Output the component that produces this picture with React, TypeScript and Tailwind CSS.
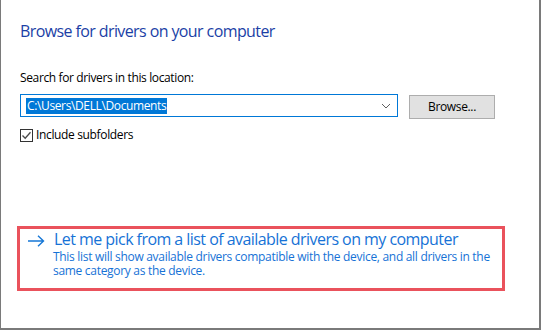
import React from "react";

const font = { fontFamily: '"Open Sans", "Noto Sans", sans-serif' };

export default function App() {
  return (
    <div
      className="w-[541px] h-[330px] bg-white border-l border-r-2 border-b-2 border-[#7a7a7a] flex flex-col"
      style={font}
    >
      <div className="pl-[19px] flex flex-col">
        <div className="mt-[21px] h-[20px] leading-[20px] text-[16px] text-[#1b3fa6] tracking-[-0.6px]">
          Browse for drivers on your computer
        </div>
        <div className="mt-[29px] h-[16px] leading-[16px] text-[12px] text-black tracking-[-0.37px]">
          Search for drivers in this location:
        </div>
        <div className="mt-[8px] flex items-start">
          <div className="w-[378px] h-[23px] border border-[#0078d7] flex items-center pl-[5px] pr-[6px]">
            <span className="h-[16px] leading-[16px] bg-[#0078d7] text-white text-[12px] px-[1px] tracking-[-0.37px]">
              C:\Users\DELL\Documents
            </span>
            <div className="flex-1" />
            <svg width="10" height="6" viewBox="0 0 10 6" className="mt-[1px]">
              <path d="M1 1 L5 5 L9 1" fill="none" stroke="#606060" strokeWidth="1" />
            </svg>
          </div>
          <button className="ml-[11px] mt-[1px] w-[86px] h-[24px] bg-[#e1e1e1] border border-[#adadad] text-[12px] leading-[20px] text-black tracking-[-0.35px]">
            Browse...
          </button>
        </div>
        <div className="mt-[9px] flex items-center h-[14px]">
          <div className="w-[13px] h-[13px] border border-[#333] flex items-center justify-center bg-white">
            <svg width="11" height="11" viewBox="0 0 11 11">
              <path d="M1.5 5.5 L4.2 8.3 L9.5 2.2" fill="none" stroke="#4a4a4a" strokeWidth="1.3" />
            </svg>
          </div>
          <span className="ml-[3px] text-[12px] leading-[14px] text-black tracking-[-0.35px]">
            Include subfolders
          </span>
        </div>
      </div>
      <div className="ml-[16px] mt-[84px] w-[488px] h-[65px] border-[3px] border-[#ea525c] flex flex-col">
        <div className="flex items-start mt-[1px] h-[18px]">
          <svg width="17" height="12" viewBox="0 0 17 12" className="ml-[8px] mt-[5px]">
            <path d="M0 6 H15.5 M10 0.8 L15.5 6 L10 11.2" fill="none" stroke="#1677d6" strokeWidth="1.4" />
          </svg>
          <span className="ml-[9px] text-[16px] leading-[18px] text-[#1672d6] tracking-[-0.55px]">
            Let me pick from a list of available drivers on my computer
          </span>
        </div>
        <div className="ml-[33px] mt-[2px] text-[12px] leading-[14px] text-[#1672d6] tracking-[-0.3px] w-[445px]">
          This list will show available drivers compatible with the device, and all drivers in the same category as the device.
        </div>
      </div>
    </div>
  );
}
